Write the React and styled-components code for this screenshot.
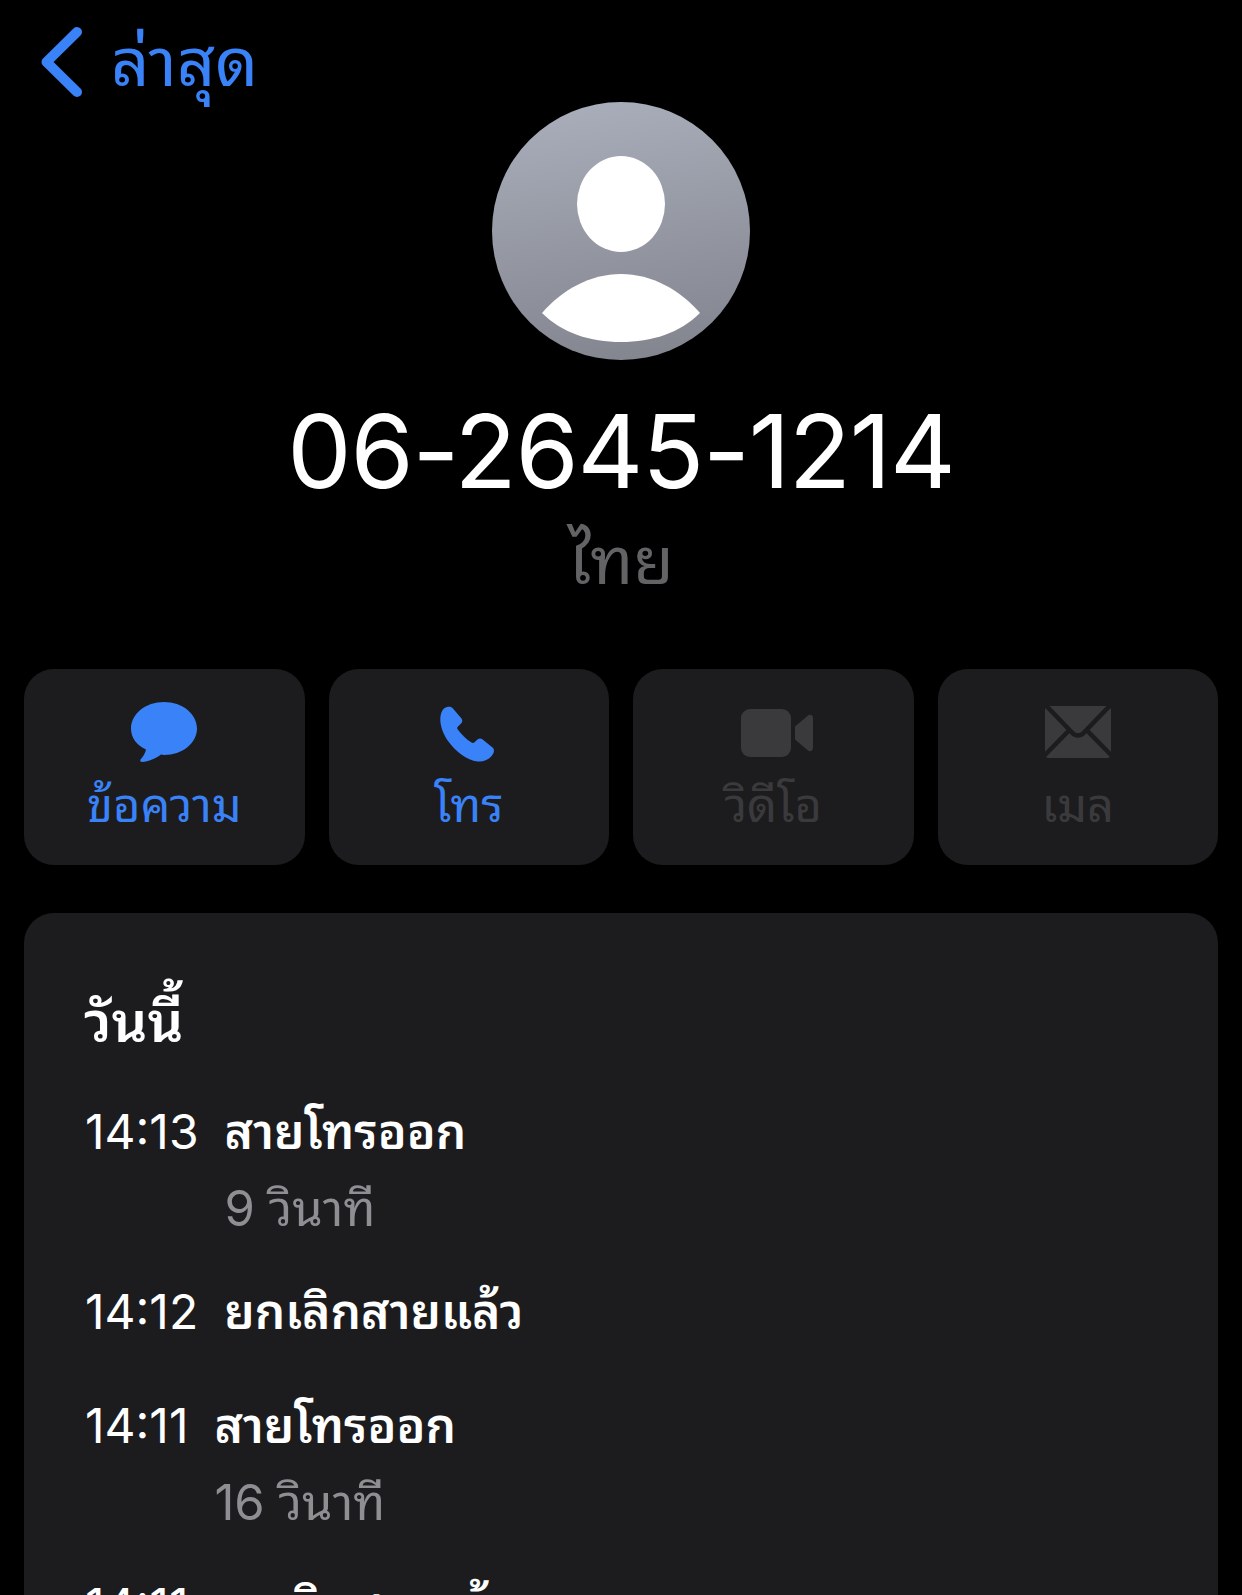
import React from "react";
import styled, { createGlobalStyle } from "styled-components";

const BLUE = "#3a82f7";
const DIM = "#3a3a3c";
const CARD = "#1c1c1e";

const GlobalStyle = createGlobalStyle`
  html, body {
    margin: 0;
    background: #000;
    height: 1595px;
    overflow: hidden;
  }
  body {
    font-family: "Inter", "Noto Sans Thai Looped", "Loma", "Garuda", "Waree", "Noto Sans Thai", "Noto Sans", "DejaVu Sans", sans-serif;
  }
`;

const Page = styled.div`
  width: 1242px;
  height: 1595px;
  overflow: hidden;
  display: flex;
  flex-direction: column;
  background: #000;
  color: #fff;
`;

const TopBar = styled.div`
  display: flex;
  align-items: center;
  height: 70px;
  padding: 27px 0 0 40px;
  gap: 27px;
  color: ${BLUE};
`;

const BackLabel = styled.span`
  font-size: 67px;
  line-height: 70px;
`;

const Header = styled.div`
  display: flex;
  flex-direction: column;
  align-items: center;
  margin-top: 5px;
`;

const Avatar = styled.svg`
  width: 258px;
  height: 258px;
  display: block;
`;

const Number = styled.div`
  font-size: 102px;
  line-height: 120px;
  margin-top: 31px;
  font-weight: 375;
  letter-spacing: -1.25px;
`;

const Country = styled.div`
  font-size: 66px;
  line-height: 92px;
  margin-top: 3px;
  color: #636366;
`;

const Actions = styled.div`
  display: grid;
  grid-template-columns: repeat(4, 1fr);
  gap: 24px;
  padding: 0 24px;
  margin-top: 63px;
`;

const Action = styled.div`
  height: 196px;
  border-radius: 30px;
  background: ${CARD};
  display: flex;
  flex-direction: column;
  align-items: center;
  padding-top: 32px;
  box-sizing: border-box;
  color: ${(p) => (p.$disabled ? DIM : BLUE)};
`;

const ActionIcon = styled.div`
  height: 62px;
  display: flex;
  align-items: center;
  justify-content: center;
  padding: ${(p) => p.$nudge || "0"};
  box-sizing: border-box;
`;

const ActionLabel = styled.div`
  font-size: 47px;
  line-height: 60px;
  margin-top: 12px;
`;

const Panel = styled.div`
  margin: 48px 24px 0;
  flex: 1;
  background: ${CARD};
  border-radius: 30px 30px 0 0;
  padding: 74px 60px 0;
`;

const DayTitle = styled.div`
  font-size: 56px;
  line-height: 70px;
  font-weight: 600;
`;

const CallRow = styled.div`
  display: flex;
  gap: 26px;
  margin-top: ${(p) => p.$top}px;
`;

const CallTime = styled.div`
  font-size: 48px;
  line-height: 60px;
  font-weight: 380;
  padding-left: 1px;
`;

const CallBody = styled.div`
  display: flex;
  flex-direction: column;
`;

const CallTitle = styled.div`
  font-size: 48px;
  line-height: 60px;
  font-weight: 600;
`;

const CallDuration = styled.div`
  font-size: 49px;
  line-height: 60px;
  margin-top: 17px;
  color: #8e8e93;
`;

const calls = [
  { time: "14:13", title: "สายโทรออก", duration: "9 วินาที", top: 45 },
  { time: "14:12", title: "ยกเลิกสายแล้ว", top: 43 },
  { time: "14:11", title: "สายโทรออก", duration: "16 วินาที", top: 54 },
  { time: "14:11", title: "ยกเลิกสายแล้ว", top: 43 },
];

const Chevron = () => (
  <svg width="44" height="72" viewBox="0 0 44 72" fill="none">
    <path d="M37 6 L6.5 36 L37 66" stroke="currentColor" strokeWidth="10" strokeLinecap="round" strokeLinejoin="round" />
  </svg>
);

const MessageIcon = () => (
  <svg width="68" height="62" viewBox="0 0 68 62" fill="currentColor">
    <path d="M34 1C15.5 1 1 13 1 27.5 1 37 6.8 44 16 48.5 15.5 52 13 55.5 10.5 58.5 9.8 59.5 10.5 61 12 61 18.5 60.5 26 57.5 31 53.5 32 53.7 33 54 34 54 52.5 54 67 42 67 27.5 67 13 52.5 1 34 1Z" />
  </svg>
);

const PhoneIcon = () => (
  <svg width="55" height="56" viewBox="0 0 55 56" fill="currentColor">
    <path d="M4 2.5C6.5 0.5 10.5 0 12.5 2L21.5 12.5C22.5 14 22.5 15.5 21.5 17L18 20.5C17 21.5 17 22.5 17.8 23.5 21.5 28.5 26.5 33.5 31.5 36.5 32.7 37.2 33.8 37 34.8 36L37.5 33.5C39 32.3 40.5 32 42 33L52.5 41.5C55 43.5 54 47 52 49.5 48.5 54 43 56 37.5 55.5 27 54.5 15.5 45.5 8 35 3.5 28.5 0 20 0.3 12.5 0.4 8.5 1.8 4.5 4 2.5Z" />
  </svg>
);

const VideoIcon = () => (
  <svg width="72" height="48" viewBox="0 0 72 48" fill="currentColor">
    <rect x="0" y="0" width="50" height="48" rx="9" />
    <path d="M54 17.5 67 6.5C69 5 72 6 72 9V39C72 42 69 43 67 41.5L54 30.5Z" />
  </svg>
);

const MailIcon = () => (
  <svg width="66" height="52" viewBox="0 0 66 52">
    <rect x="0" y="0" width="66" height="52" rx="4" fill={DIM} />
    <g fill="none" stroke={CARD} strokeWidth="4.5">
      <path d="M1.5 0 L27 26.5 C30.5 30.5 35.5 30.5 39 26.5 L64.5 0" />
      <path d="M-1 50 L23.5 25" />
      <path d="M67 50 L42.5 25" />
    </g>
  </svg>
);

const actions = [
  { label: "ข้อความ", icon: <MessageIcon /> },
  { label: "โทร", icon: <PhoneIcon />, nudge: "3px 3px 0 0" },
  { label: "วิดีโอ", icon: <VideoIcon />, nudge: "2px 0 0 8px", disabled: true },
  { label: "เมล", icon: <MailIcon />, disabled: true },
];

const App = () => (
  <Page>
    <GlobalStyle />
    <TopBar>
      <Chevron />
      <BackLabel>ล่าสุด</BackLabel>
    </TopBar>
    <Header>
      <Avatar viewBox="0 0 258 258">
        <defs>
          <linearGradient id="avatarFill" x1="0.42" y1="0" x2="0.58" y2="1">
            <stop offset="0" stopColor="#a8adb9" />
            <stop offset="1" stopColor="#83858f" />
          </linearGradient>
        </defs>
        <circle cx="129" cy="129" r="129" fill="url(#avatarFill)" />
        <ellipse cx="129" cy="102" rx="44" ry="48" fill="#fff" />
        <path d="M50 211C70 188 98 172 129 172 160 172 188 188 208 211 188 231 160 240 129 240 98 240 70 231 50 211Z" fill="#fff" />
      </Avatar>
      <Number>06-2645-1214</Number>
      <Country>ไทย</Country>
    </Header>
    <Actions>
      {actions.map((a) => (
        <Action key={a.label} $disabled={a.disabled}>
          <ActionIcon $nudge={a.nudge}>{a.icon}</ActionIcon>
          <ActionLabel>{a.label}</ActionLabel>
        </Action>
      ))}
    </Actions>
    <Panel>
      <DayTitle>วันนี้</DayTitle>
      {calls.map((c, i) => (
        <CallRow key={i} $top={c.top}>
          <CallTime>{c.time}</CallTime>
          <CallBody>
            <CallTitle>{c.title}</CallTitle>
            {c.duration && <CallDuration>{c.duration}</CallDuration>}
          </CallBody>
        </CallRow>
      ))}
    </Panel>
  </Page>
);

export default App;
